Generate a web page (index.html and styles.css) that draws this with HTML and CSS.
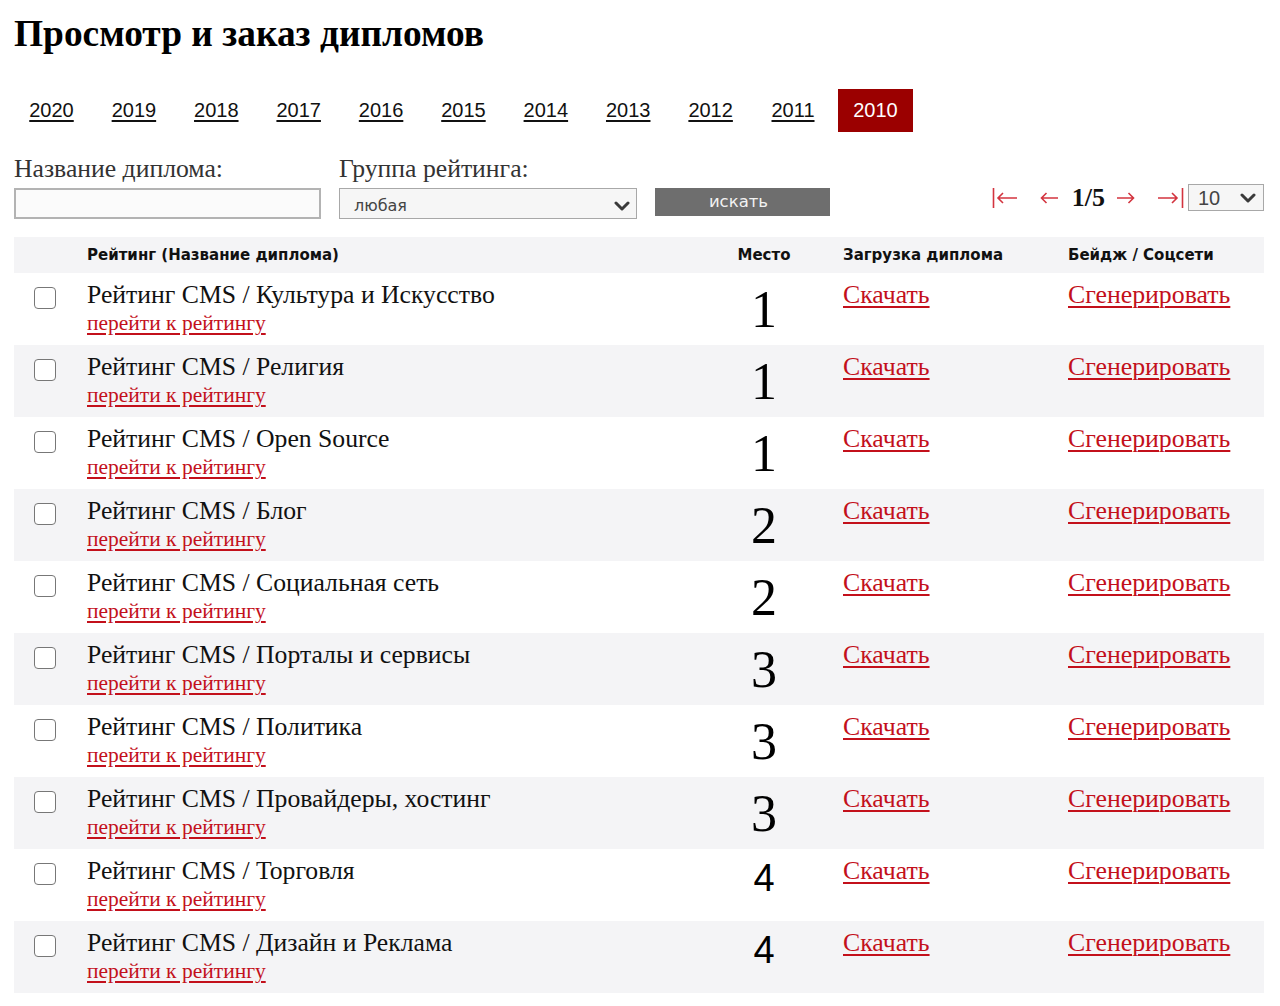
FILE: index.html
```html
<!DOCTYPE html>
<html lang="ru">
<head>
<meta charset="utf-8">
<title>Просмотр и заказ дипломов</title>
<link rel="stylesheet" href="styles.css">
</head>
<body>
<div class="page">
  <h1 class="title">Просмотр и заказ дипломов</h1>

  <nav class="years">
    <a class="year" href="#">2020</a>
    <a class="year" href="#">2019</a>
    <a class="year" href="#">2018</a>
    <a class="year" href="#">2017</a>
    <a class="year" href="#">2016</a>
    <a class="year" href="#">2015</a>
    <a class="year" href="#">2014</a>
    <a class="year" href="#">2013</a>
    <a class="year" href="#">2012</a>
    <a class="year" href="#">2011</a>
    <span class="year year--active">2010</span>
  </nav>

  <form class="filters">
    <label class="field field--name">
      <span class="field__label">Название диплома:</span>
      <input class="input" type="text">
    </label>
    <label class="field field--group">
      <span class="field__label">Группа рейтинга:</span>
      <span class="select select--wide">
        <span class="select__value">любая</span>
        <svg class="chevron" width="16" height="10" viewBox="0 0 16 10"><path d="M2 2 L8 8 L14 2" fill="none" stroke="#3a3a3a" stroke-width="3" stroke-linecap="round" stroke-linejoin="round"/></svg>
      </span>
    </label>
    <button class="search-btn" type="button">искать</button>

    <div class="pager">
      <a class="pager__btn pager__btn--first" href="#">
        <svg width="26" height="22" viewBox="0 0 26 22"><path d="M1.5 1V21 M25 11H6 M11 6 L6 11 L11 16" fill="none" stroke="#d3343f" stroke-width="1.6"/></svg>
      </a>
      <a class="pager__btn pager__btn--prev" href="#">
        <svg width="18" height="22" viewBox="0 0 18 22"><path d="M18 11H1.5 M6.5 6 L1.5 11 L6.5 16" fill="none" stroke="#d3343f" stroke-width="1.6"/></svg>
      </a>
      <span class="pager__current">1/5</span>
      <a class="pager__btn pager__btn--next" href="#">
        <svg width="18" height="22" viewBox="0 0 18 22"><path d="M0 11H16.5 M11.5 6 L16.5 11 L11.5 16" fill="none" stroke="#d3343f" stroke-width="1.6"/></svg>
      </a>
      <a class="pager__btn pager__btn--last" href="#">
        <svg width="27" height="22" viewBox="0 0 27 22"><path d="M25.5 1V21 M1 11H20 M15 6 L20 11 L15 16" fill="none" stroke="#d3343f" stroke-width="1.6"/></svg>
      </a>
      <span class="select select--small">
        <span class="select__value select__value--num">10</span>
        <svg class="chevron" width="16" height="10" viewBox="0 0 16 10"><path d="M2 2 L8 8 L14 2" fill="none" stroke="#3a3a3a" stroke-width="3" stroke-linecap="round" stroke-linejoin="round"/></svg>
      </span>
    </div>
  </form>

  <div class="table">
    <div class="row row--head">
      <div class="cell"></div>
      <div class="cell">Рейтинг (Название диплома)</div>
      <div class="cell cell--place">Место</div>
      <div class="cell">Загрузка диплома</div>
      <div class="cell">Бейдж / Соцсети</div>
    </div>

    <div class="row">
      <div class="cell cell--check"><input class="checkbox" type="checkbox"></div>
      <div class="cell cell--name"><div class="name">Рейтинг CMS / Культура и Искусство</div><a class="link link--sub" href="#">перейти к рейтингу</a></div>
      <div class="cell cell--place"><span class="place">1</span></div>
      <div class="cell cell--link"><a class="link" href="#">Скачать</a></div>
      <div class="cell cell--link"><a class="link" href="#">Сгенерировать</a></div>
    </div>

    <div class="row">
      <div class="cell cell--check"><input class="checkbox" type="checkbox"></div>
      <div class="cell cell--name"><div class="name">Рейтинг CMS / Религия</div><a class="link link--sub" href="#">перейти к рейтингу</a></div>
      <div class="cell cell--place"><span class="place">1</span></div>
      <div class="cell cell--link"><a class="link" href="#">Скачать</a></div>
      <div class="cell cell--link"><a class="link" href="#">Сгенерировать</a></div>
    </div>

    <div class="row">
      <div class="cell cell--check"><input class="checkbox" type="checkbox"></div>
      <div class="cell cell--name"><div class="name">Рейтинг CMS / Open Source</div><a class="link link--sub" href="#">перейти к рейтингу</a></div>
      <div class="cell cell--place"><span class="place">1</span></div>
      <div class="cell cell--link"><a class="link" href="#">Скачать</a></div>
      <div class="cell cell--link"><a class="link" href="#">Сгенерировать</a></div>
    </div>

    <div class="row">
      <div class="cell cell--check"><input class="checkbox" type="checkbox"></div>
      <div class="cell cell--name"><div class="name">Рейтинг CMS / Блог</div><a class="link link--sub" href="#">перейти к рейтингу</a></div>
      <div class="cell cell--place"><span class="place">2</span></div>
      <div class="cell cell--link"><a class="link" href="#">Скачать</a></div>
      <div class="cell cell--link"><a class="link" href="#">Сгенерировать</a></div>
    </div>

    <div class="row">
      <div class="cell cell--check"><input class="checkbox" type="checkbox"></div>
      <div class="cell cell--name"><div class="name">Рейтинг CMS / Социальная сеть</div><a class="link link--sub" href="#">перейти к рейтингу</a></div>
      <div class="cell cell--place"><span class="place">2</span></div>
      <div class="cell cell--link"><a class="link" href="#">Скачать</a></div>
      <div class="cell cell--link"><a class="link" href="#">Сгенерировать</a></div>
    </div>

    <div class="row">
      <div class="cell cell--check"><input class="checkbox" type="checkbox"></div>
      <div class="cell cell--name"><div class="name">Рейтинг CMS / Порталы и сервисы</div><a class="link link--sub" href="#">перейти к рейтингу</a></div>
      <div class="cell cell--place"><span class="place">3</span></div>
      <div class="cell cell--link"><a class="link" href="#">Скачать</a></div>
      <div class="cell cell--link"><a class="link" href="#">Сгенерировать</a></div>
    </div>

    <div class="row">
      <div class="cell cell--check"><input class="checkbox" type="checkbox"></div>
      <div class="cell cell--name"><div class="name">Рейтинг CMS / Политика</div><a class="link link--sub" href="#">перейти к рейтингу</a></div>
      <div class="cell cell--place"><span class="place">3</span></div>
      <div class="cell cell--link"><a class="link" href="#">Скачать</a></div>
      <div class="cell cell--link"><a class="link" href="#">Сгенерировать</a></div>
    </div>

    <div class="row">
      <div class="cell cell--check"><input class="checkbox" type="checkbox"></div>
      <div class="cell cell--name"><div class="name">Рейтинг CMS / Провайдеры, хостинг</div><a class="link link--sub" href="#">перейти к рейтингу</a></div>
      <div class="cell cell--place"><span class="place">3</span></div>
      <div class="cell cell--link"><a class="link" href="#">Скачать</a></div>
      <div class="cell cell--link"><a class="link" href="#">Сгенерировать</a></div>
    </div>

    <div class="row">
      <div class="cell cell--check"><input class="checkbox" type="checkbox"></div>
      <div class="cell cell--name"><div class="name">Рейтинг CMS / Торговля</div><a class="link link--sub" href="#">перейти к рейтингу</a></div>
      <div class="cell cell--place"><span class="place place--sans">4</span></div>
      <div class="cell cell--link"><a class="link" href="#">Скачать</a></div>
      <div class="cell cell--link"><a class="link" href="#">Сгенерировать</a></div>
    </div>

    <div class="row">
      <div class="cell cell--check"><input class="checkbox" type="checkbox"></div>
      <div class="cell cell--name"><div class="name">Рейтинг CMS / Дизайн и Реклама</div><a class="link link--sub" href="#">перейти к рейтингу</a></div>
      <div class="cell cell--place"><span class="place place--sans">4</span></div>
      <div class="cell cell--link"><a class="link" href="#">Скачать</a></div>
      <div class="cell cell--link"><a class="link" href="#">Сгенерировать</a></div>
    </div>
  </div>
</div>
</body>
</html>
```

FILE: styles.css
```css
* {
  box-sizing: border-box;
}

html, body {
  margin: 0;
  padding: 0;
  background: #ffffff;
}

body {
  font-family: "Liberation Serif", "Times New Roman", serif;
  color: #111111;
}

.page {
  padding: 14px 16px 0 14px;
}

.title {
  margin: 0;
  font-family: "Liberation Serif", serif;
  font-weight: bold;
  font-size: 37.4px;
  line-height: 40px;
  color: #000000;
}

/* Year tabs */
.years {
  display: flex;
  gap: 7.4px;
  margin-top: 35px;
}

.year {
  display: block;
  width: 75px;
  height: 43px;
  line-height: 43px;
  text-align: center;
  font-family: "Liberation Sans", Arial, sans-serif;
  font-size: 20px;
  color: #111111;
  text-decoration: underline;
  text-decoration-thickness: 2px;
  text-underline-offset: 3px;
}

.year--active {
  background: #9b0000;
  color: #ffffff;
  text-decoration: none;
}

/* Filters */
.filters {
  display: flex;
  align-items: flex-end;
  margin: 23px 0 0 0;
}

.field {
  display: flex;
  flex-direction: column;
}

.field--name {
  width: 307px;
  margin-right: 18px;
}

.field--group {
  width: 298px;
  margin-right: 18px;
}

.field__label {
  font-family: "Liberation Serif", serif;
  font-size: 25.7px;
  line-height: 28px;
  color: #333333;
  margin-bottom: 5px;
}

.input {
  display: block;
  width: 100%;
  height: 31px;
  margin: 0;
  border: 2px solid #b3b3b3;
  background: #fbfbfb;
  font: inherit;
}

.select {
  display: flex;
  align-items: center;
  justify-content: space-between;
  border: 1.5px solid #a8a8a8;
  background: #f6f6f6;
  color: #444444;
  font-family: "DejaVu Sans", Verdana, sans-serif;
}

.select--wide {
  height: 31px;
  padding: 4px 6px 0 14px;
  font-size: 16px;
}

.select--small {
  width: 76px;
  height: 27px;
  padding: 1px 7px 0 9px;
  font-size: 18px;
}

.select__value--num {
  font-family: "Liberation Sans", Arial, sans-serif;
  font-size: 20px;
}

.chevron {
  display: block;
  flex: none;
}

.search-btn {
  width: 175px;
  height: 28px;
  margin: 0 0 3px 0;
  padding: 0 8px 0 0;
  border: none;
  background: #6e6e6e;
  color: #f2f2f2;
  font-family: "DejaVu Sans", Verdana, sans-serif;
  font-size: 16.5px;
  line-height: 28px;
}

/* Pager */
.pager {
  display: flex;
  align-items: center;
  margin: 0 0 8px auto;
}

.pager__btn {
  display: block;
  line-height: 0;
}

.pager__btn--prev {
  margin-left: 22px;
}

.pager__current {
  margin-left: 14px;
  font-family: "Liberation Serif", serif;
  font-weight: bold;
  font-size: 26px;
  line-height: 27px;
  color: #111111;
}

.pager__btn--next {
  margin-left: 12px;
}

.pager__btn--last {
  margin-left: 22px;
}

.pager .select--small {
  margin-left: 4px;
}

/* Table */
.table {
  margin-top: 18px;
}

.row {
  display: grid;
  grid-template-columns: 73px 1fr 132px 225px 196px;
  height: 72px;
  background: #ffffff;
}

.row:nth-child(odd) {
  background: #f4f4f6;
}

.row--head {
  height: 36px;
  background: #e8e4e6;
  font-family: "DejaVu Sans", Verdana, sans-serif;
  font-weight: bold;
  font-size: 15px;
  line-height: 37px;
  color: #111111;
}

.row--head .cell--place {
  padding-top: 0;
}

.cell--place {
  text-align: center;
  padding-right: 26px;
  padding-top: 11px;
}

.cell--check {
  padding: 14px 0 0 20px;
}

.checkbox {
  appearance: none;
  -webkit-appearance: none;
  display: block;
  width: 22px;
  height: 22px;
  margin: 0;
  border: 1.5px solid #777777;
  border-radius: 4px;
  background: #ffffff;
}

.cell--name {
  padding-top: 8px;
}

.name {
  font-size: 25.7px;
  line-height: 28px;
  color: #111111;
}

.link {
  color: #c3101b;
  text-decoration: underline;
  text-decoration-thickness: 1.5px;
  text-underline-offset: 3px;
  font-size: 25.8px;
  line-height: 28px;
}

.link--sub {
  display: inline-block;
  font-size: 21.5px;
  line-height: 28px;
}

.cell--link {
  padding-top: 8px;
}

.place {
  display: inline-block;
  font-family: "Liberation Serif", serif;
  font-size: 52px;
  line-height: 52px;
  color: #000000;
}

.place--sans {
  font-family: "Liberation Sans", Arial, sans-serif;
  font-size: 38px;
  line-height: 52px;
  position: relative;
  top: -8px;
}
```
